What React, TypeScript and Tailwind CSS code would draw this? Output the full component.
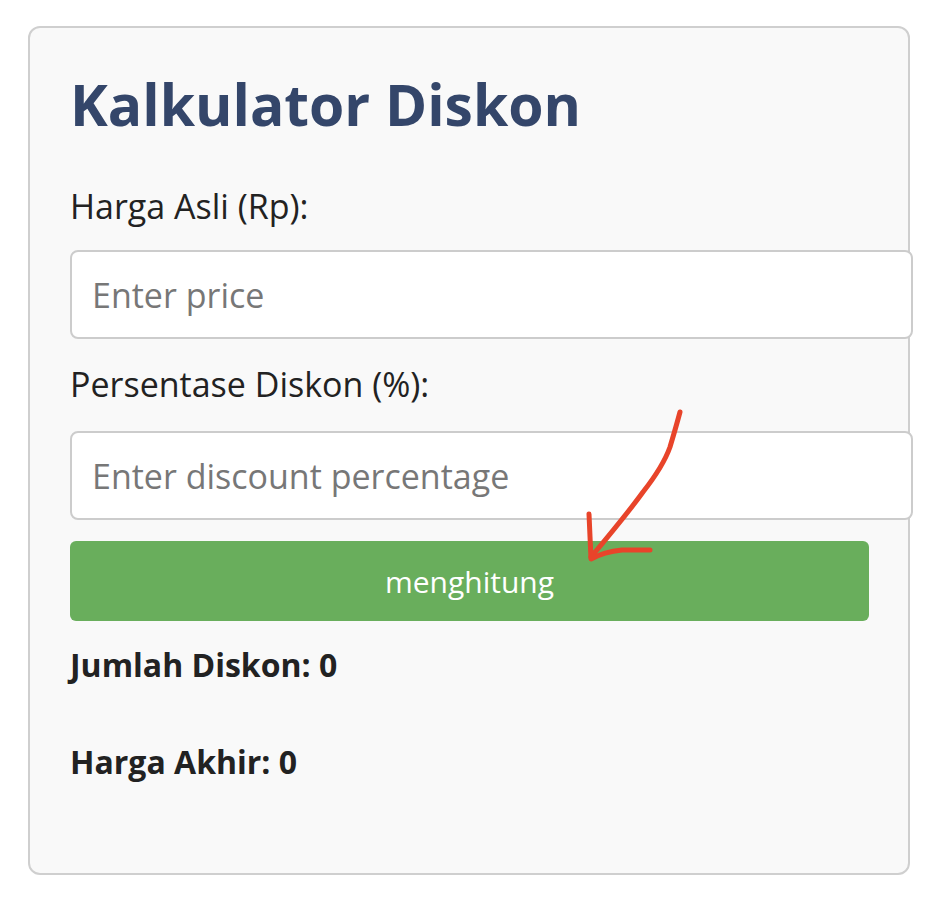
export default function App() {
  return (
    <div className="min-h-screen bg-white pt-[26px] pl-[28px] font-['Open_Sans',sans-serif] text-[#222]">
      <div className="relative w-[882px] h-[849px] rounded-[12px] border-2 border-[#cfcfcf] bg-[#f9f9f9] px-[40px] pt-[44px]">
        <h1 className="text-[57px] leading-[65px] font-bold text-[#34466a]">Kalkulator Diskon</h1>

        <label className="mt-[47px] block text-[34px] leading-[45px]">Harga Asli (Rp):</label>
        <input
          type="text"
          placeholder="Enter price"
          className="mt-[21px] block w-[843px] h-[89px] rounded-[8px] border-2 border-[#cccccc] bg-white px-[20px] text-[34px] placeholder:text-[#777]"
        />

        <label className="mt-[23px] block text-[34px] leading-[45px]">Persentase Diskon (%):</label>
        <input
          type="text"
          placeholder="Enter discount percentage"
          className="mt-[24px] block w-[843px] h-[89px] rounded-[8px] border-2 border-[#cccccc] bg-white px-[20px] text-[34px] placeholder:text-[#777]"
        />

        <button className="mt-[21px] block w-[799px] h-[80px] rounded-[6px] bg-[#69ae5c] text-[30px] text-white">
          menghitung
        </button>

        <p className="mt-[23px] text-[32px] leading-[42px] font-bold">Jumlah Diskon: 0</p>
        <p className="mt-[55px] text-[32px] leading-[42px] font-bold">Harga Akhir: 0</p>

        <svg
          className="pointer-events-none absolute left-[-28px] top-[-26px]"
          width="950"
          height="902"
          fill="none"
          stroke="#e8442a"
          strokeWidth="5"
          strokeLinecap="round"
          strokeLinejoin="round"
        >
          <path d="M678 410 C674 425 671 435 668 445 C662 462 652 476 641 490 C628 508 610 530 589 555" />
          <path d="M587 512 L589 557 C598 552 610 549 620 548 L648 548" />
        </svg>
      </div>
    </div>
  );
}
